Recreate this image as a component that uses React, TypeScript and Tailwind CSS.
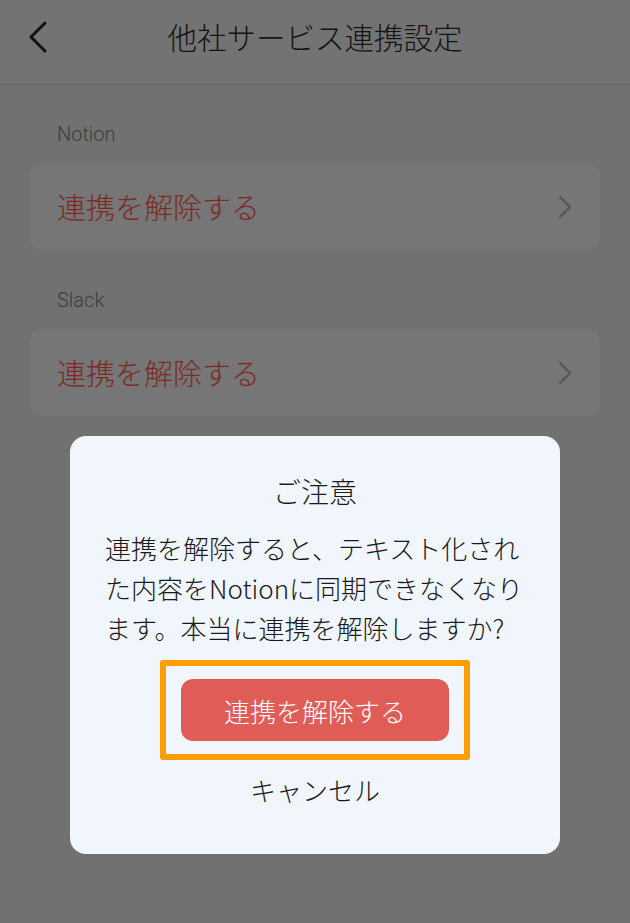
export default function App() {
  const font = { fontFamily: '"Noto Sans CJK JP", "Noto Sans", sans-serif' };
  return (
    <div className="relative h-[923px] w-[630px] overflow-hidden bg-[#717171] font-light" style={font}>
      {/* header */}
      <div className="relative flex h-[85px] items-center justify-center border-b border-[#666666] bg-[#737373]">
        <svg className="absolute left-[26px] top-[20px]" width="26" height="34" viewBox="0 0 26 34" fill="none">
          <path d="M19 3 L5 17 L19 31" stroke="#111111" strokeWidth="3" strokeLinecap="round" strokeLinejoin="round" />
        </svg>
        <div className="pb-[10px] text-[29.5px] leading-none text-[#141414]">他社サービス連携設定</div>
      </div>

      {/* list */}
      <div className="px-[30px]">
        {["Notion", "Slack"].map((name, i) => (
          <div key={name} className={i === 0 ? "pt-[35px]" : "pt-[36px]"}>
            <div className="pl-[27px] text-[20px] leading-[28px] text-[#3c3c3c]" style={{ fontFamily: 'Roboto, "Noto Sans", sans-serif' }}>{name}</div>
            <div className="mt-[15px] flex h-[87px] items-center justify-between rounded-[12px] bg-[#767676] pl-[27px] pr-[28px]">
              <span className="text-[29px] leading-none text-[#7c2a25]">連携を解除する</span>
              <svg width="14" height="24" viewBox="0 0 14 24" fill="none">
                <path d="M2 2 L12 12 L2 22" stroke="#555555" strokeWidth="2" strokeLinecap="round" strokeLinejoin="round" />
              </svg>
            </div>
          </div>
        ))}
      </div>

      {/* dialog */}
      <div className="absolute left-[70px] top-[436px] flex h-[418px] w-[490px] flex-col items-center rounded-[16px] bg-[#f1f5fc] pt-[38px]">
        <div className="text-[28px] leading-[34px] text-[#1a1a1a]">ご注意</div>
        <p className="mt-[20px] w-[420px] text-[26px] leading-[40px] text-[#1a1a1a]">
          連携を解除すると、テキスト化された内容をNotionに同期できなくなります。本当に連携を解除しますか?
        </p>
        <div className="mt-[12px] rounded-[3px] border-[6px] border-[#ff9c00] px-[15px] py-[13px]">
          <div className="flex h-[62px] w-[268px] items-center justify-center rounded-[12px] bg-[#df5c57] text-[26px] text-white">
            連携を解除する
          </div>
        </div>
        <div className="mt-[12px] text-[26px] leading-[36px] text-[#1a1a1a]">キャンセル</div>
      </div>
    </div>
  );
}
